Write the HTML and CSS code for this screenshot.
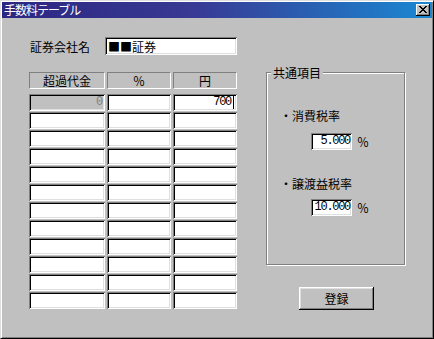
FILE: index.html
```html
<!DOCTYPE html>
<html lang="ja">
<head>
<meta charset="utf-8">
<title>手数料テーブル</title>
<link rel="stylesheet" href="styles.css">
</head>
<body>
<div class="window">
  <div class="titlebar">
    <span class="title">手数料テーブル</span>
    <span class="close">
      <svg width="8" height="7" viewBox="0 0 8 7"><path d="M0 0h2v1h-2zM6 0h2v1h-2zM1 1h2v1h-2zM5 1h2v1h-2zM2 2h4v1h-4zM3 3h2v1h-2zM2 4h4v1h-4zM1 5h2v1h-2zM5 5h2v1h-2zM0 6h2v1h-2zM6 6h2v1h-2z" fill="#000"/></svg>
    </span>
  </div>
  <div class="client">
    <div class="left">
      <div class="company">
        <span class="company-label">証券会社名</span>
        <div class="field company-field">■■証券</div>
      </div>
      <div class="grid head">
        <div class="hcell">超過代金</div>
        <div class="hcell">％</div>
        <div class="hcell">円</div>
      </div>
      <div class="grid rows">
        <div class="field cell disabled"><span class="num gray">0</span></div>
        <div class="field cell"></div>
        <div class="field cell"><span class="num">700</span><span class="caret"></span></div>
        <div class="field cell"></div><div class="field cell"></div><div class="field cell"></div>
        <div class="field cell"></div><div class="field cell"></div><div class="field cell"></div>
        <div class="field cell"></div><div class="field cell"></div><div class="field cell"></div>
        <div class="field cell"></div><div class="field cell"></div><div class="field cell"></div>
        <div class="field cell"></div><div class="field cell"></div><div class="field cell"></div>
        <div class="field cell"></div><div class="field cell"></div><div class="field cell"></div>
        <div class="field cell"></div><div class="field cell"></div><div class="field cell"></div>
        <div class="field cell"></div><div class="field cell"></div><div class="field cell"></div>
        <div class="field cell"></div><div class="field cell"></div><div class="field cell"></div>
        <div class="field cell"></div><div class="field cell"></div><div class="field cell"></div>
        <div class="field cell"></div><div class="field cell"></div><div class="field cell"></div>
      </div>
    </div>
    <div class="right">
      <fieldset class="group">
        <legend class="legend">共通項目</legend>
        <div class="tax-label first">・消費税率</div>
        <div class="tax-row first">
          <div class="field small"><span class="num">5.000</span></div>
          <span class="pct">％</span>
        </div>
        <div class="tax-label second">・譲渡益税率</div>
        <div class="tax-row second">
          <div class="field small"><span class="num">10.000</span></div>
          <span class="pct">％</span>
        </div>
      </fieldset>
      <button class="btn">登録</button>
    </div>
  </div>
</div>
</body>
</html>
```

FILE: styles.css
```css
* { box-sizing: border-box; }
html, body { margin: 0; padding: 0; background: #c0c0c0; }
body {
  font-family: "Noto Sans CJK JP", "Noto Sans", sans-serif;
  font-size: 12px;
  line-height: 15px;
  color: #000;
}
.window {
  width: 434px;
  height: 339px;
  border: 1px solid;
  border-color: #dfdfdf #000 #000 #dfdfdf;
  box-shadow: inset 1px 1px #fff, inset -1px -1px #808080;
  padding: 1px;
  background: #c0c0c0;
  display: flex;
  flex-direction: column;
}
.titlebar {
  height: 16px;
  flex: none;
  display: flex;
  align-items: flex-start;
  justify-content: space-between;
  background: linear-gradient(90deg, #2c2682 0%, #383a94 45%, #1a88d2 100%);
  padding-left: 2px;
}
.title {
  color: #fff;
  letter-spacing: -1px;
  line-height: 16px;
}
.close {
  width: 14px;
  height: 12px;
  margin: 2px 2px 0 0;
  background: #c0c0c0;
  box-shadow: inset -1px -1px #000, inset 1px 1px #fff, inset -2px -2px #808080;
  display: flex;
  align-items: center;
  justify-content: center;
  padding-bottom: 1px;
}
.close svg { display: block; }
.client {
  flex: 1;
  display: flex;
  align-items: flex-start;
}
.left {
  padding-left: 27px;
  padding-top: 19px;
}
.company {
  display: flex;
  align-items: center;
  height: 18px;
}
.company-label {
  width: 76px;
  padding-left: 1px;
}
.field {
  background: #fff;
  box-shadow: inset 1px 1px #808080, inset -1px -1px #fff, inset 2px 2px #000, inset -2px -2px #dfdfdf;
  display: flex;
  align-items: center;
}
.company-field {
  width: 132px;
  height: 18px;
  padding-left: 3px;
}
.grid {
  display: grid;
  grid-template-columns: 76px 64px 64px;
  column-gap: 2px;
}
.head {
  margin-top: 17px;
  margin-bottom: 5px;
}
.hcell {
  height: 17px;
  border: 1px solid;
  border-color: #808080 #fff #fff #808080;
  text-align: center;
  line-height: 15px;
}
.rows {
  grid-auto-rows: 17px;
  row-gap: 1px;
}
.cell {
  justify-content: flex-end;
  padding-right: 3px;
}
.cell.disabled { background: #c0c0c0; }
.num {
  font-family: "Liberation Mono", "DejaVu Sans Mono", monospace;
  font-size: 12px;
  letter-spacing: -1.3px;
  line-height: 13px;
}
.gray { color: #808080; }
.caret {
  width: 1px;
  height: 13px;
  background: #000;
  margin-left: 2px;
}
.right {
  margin-left: 29px;
  display: flex;
  flex-direction: column;
  align-items: flex-start;
}
.group {
  margin: 47px 0 0 0;
  padding: 0;
  width: 139px;
  border: 1px solid #808080;
  box-shadow: inset 1px 1px #fff, 1px 1px 0 #fff;
  min-width: 0;
}
.legend {
  margin-left: 4px;
  padding: 0 2px;
  background: #c0c0c0;
  line-height: 15px;
}
.tax-label {
  padding-left: 13px;
}
.tax-label.first { margin-top: 28px; }
.tax-label.second { margin-top: 26px; }
.tax-row {
  display: flex;
  align-items: center;
  margin-left: 44px;
}
.tax-row.first { margin-top: 10px; }
.tax-row.second { margin-top: 8px; margin-bottom: 48px; }
.small {
  width: 41px;
  height: 17px;
  justify-content: flex-end;
  padding-right: 2px;
}
.pct {
  margin-left: 5px;
}
.btn {
  margin: 22px 0 0 33px;
  width: 75px;
  height: 23px;
  border: none;
  background: #c0c0c0;
  box-shadow: inset -1px -1px #000, inset 1px 1px #fff, inset -2px -2px #808080, inset 2px 2px #dfdfdf;
  font-family: "Noto Sans CJK JP", "Noto Sans", sans-serif;
  font-size: 12px;
  line-height: 15px;
  color: #000;
  padding: 0;
}
```
